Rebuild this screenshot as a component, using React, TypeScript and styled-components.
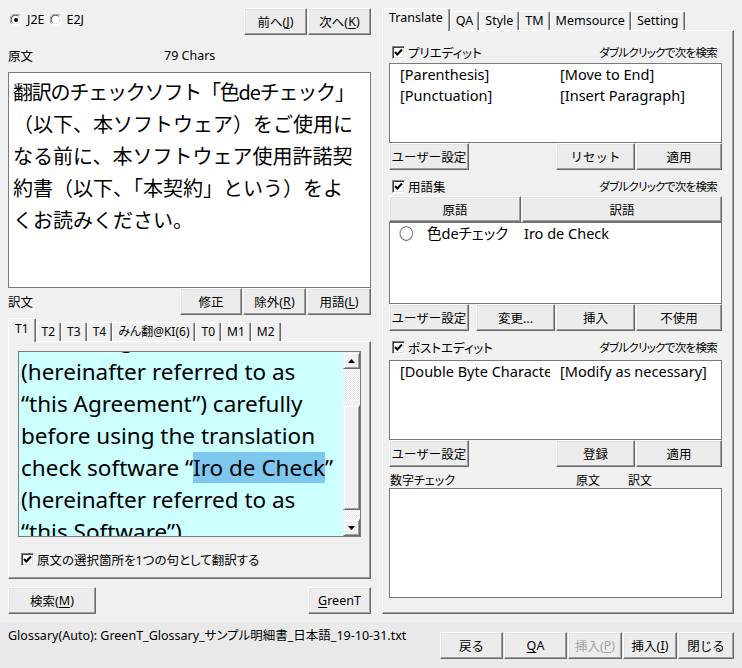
import React from "react";
import styled, { createGlobalStyle } from "styled-components";

const GlobalStyle = createGlobalStyle`
  html, body { margin: 0; padding: 0; background: #f0f0f0; }
  body {
    font-family: "Noto Sans", "Noto Sans CJK JP", sans-serif;
    font-size: 12px;
    color: #000;
  }
  * { box-sizing: border-box; }
`;

const Window = styled.div`
  width: 742px;
  height: 668px;
  display: flex;
  flex-direction: column;
  overflow: hidden;
  font-feature-settings: "palt";
`;

const Main = styled.div`
  display: flex;
  height: 622px;
`;

const LeftPane = styled.div`
  width: 363px;
  margin-left: 8px;
  padding-top: 8px;
  display: flex;
  flex-direction: column;
`;

const RightPane = styled.div`
  width: 352px;
  margin-left: 11px;
  padding-top: 8px;
  display: flex;
  flex-direction: column;
`;

const Btn = styled.button<{ $w?: number; $h?: number }>`
  width: ${(p) => (p.$w ? `${p.$w}px` : "auto")};
  height: ${(p) => p.$h ?? 27}px;
  flex-shrink: 0;
  margin: 0;
  padding: 0;
  font-family: inherit;
  font-size: 12.5px;
  color: #000;
  background: #ececec;
  border: 1px solid;
  border-color: #fff #696969 #696969 #fff;
  box-shadow: inset -1px -1px #a0a0a0, inset 1px 1px #e3e3e3;
  display: inline-flex;
  align-items: center;
  justify-content: center;
  &:disabled { color: #a3a3a3; }
  u { text-decoration-thickness: 1px; text-underline-offset: 2px; }
`;

const BtnGroup = styled.div`
  display: flex;
  gap: 1px;
`;

const TopRow = styled.div`
  height: 27px;
  display: flex;
  align-items: center;
  justify-content: space-between;
`;

const RadioGroup = styled.div`
  display: flex;
  align-items: center;
  gap: 5px;
  padding-left: 2px;
  margin-top: -4px;
`;

const RadioLabel = styled.label`
  display: flex;
  align-items: center;
  gap: 5px;
  font-size: 12.5px;
`;

const LabelRow = styled.div`
  height: 37px;
  padding-top: 4px;
  display: grid;
  grid-template-columns: 156px 1fr;
  align-items: center;
  font-size: 12.5px;
`;

const SourceBox = styled.div`
  height: 216px;
  background: #fff;
  border: 1px solid #7a7a7a;
  padding: 3px 4px;
  font-family: "Noto Sans CJK JP", sans-serif;
  font-feature-settings: normal;
  font-size: 20px;
  line-height: 32px;
  overflow: hidden;
`;

const TextLine = styled.div<{ $tight?: boolean }>`
  white-space: nowrap;
  letter-spacing: ${(p) => (p.$tight ? "-1.2px" : "0")};
`;

const TransRow = styled.div`
  height: 27px;
  display: flex;
  align-items: center;
  justify-content: space-between;
  font-size: 12.5px;
`;

const TabStrip = styled.div<{ $h: number }>`
  height: ${(p) => p.$h}px;
  display: flex;
  align-items: flex-end;
`;

const Tab = styled.div<{ $active?: boolean; $big?: boolean }>`
  position: relative;
  z-index: ${(p) => (p.$active ? 1 : 0)};
  height: ${(p) => (p.$active ? (p.$big ? 23 : 24) : 19)}px;
  margin-bottom: ${(p) => (p.$active ? -1 : 0)}px;
  padding: 0 ${(p) => (p.$active ? 6 : 5)}px ${(p) => (p.$active ? 3 : 0)}px;
  font-size: ${(p) => (p.$big ? 12.5 : 12)}px;
  line-height: 1;
  background: #f0f0f0;
  border: 1px solid;
  border-bottom: none;
  border-color: #fff #696969 transparent #fff;
  box-shadow: inset -1px 0 #a0a0a0;
  border-radius: 2px 2px 0 0;
  display: flex;
  align-items: center;
  white-space: nowrap;
`;

const TabPanel = styled.div<{ $h: number; $pad: string }>`
  height: ${(p) => p.$h}px;
  padding: ${(p) => p.$pad};
  border: 1px solid;
  border-color: #fff #696969 #696969 #fff;
  box-shadow: inset -1px -1px #a0a0a0;
  display: flex;
  flex-direction: column;
`;

const TransBox = styled.div`
  width: 343px;
  height: 186px;
  flex-shrink: 0;
  background: #ccffff;
  border: 1px solid #7a7a7a;
  display: flex;
  overflow: hidden;
`;

const TransText = styled.div`
  flex: 1;
  overflow: hidden;
  padding-left: 2px;
  font-family: "Noto Sans", sans-serif;
  font-size: 22.5px;
  line-height: 32px;
`;

const Scrolled = styled.div`
  margin-top: -28px;
`;

const Hilite = styled.span`
  display: inline-block;
  background: #7ec8ef;
  line-height: 31px;
`;

const ScrollBar = styled.div`
  width: 17px;
  flex-shrink: 0;
  display: flex;
  flex-direction: column;
`;

const ScrollPiece = styled.div<{ $h: number }>`
  height: ${(p) => p.$h}px;
  flex-shrink: 0;
  background: #f0f0f0;
  border: 1px solid;
  border-color: #f0f0f0 #696969 #696969 #f0f0f0;
  box-shadow: inset 1px 1px #fff, inset -1px -1px #a0a0a0;
  display: flex;
  align-items: center;
  justify-content: center;
`;

const Track = styled.div<{ $h: number }>`
  height: ${(p) => p.$h}px;
  flex-shrink: 0;
  background: repeating-conic-gradient(#fff 0 25%, #e4e4e4 0 50%) 0 0 / 2px 2px;
`;

const CheckRow = styled.label<{ $mt?: number; $ml?: number }>`
  display: flex;
  align-items: center;
  gap: 3px;
  margin-top: ${(p) => p.$mt ?? 0}px;
  margin-left: ${(p) => p.$ml ?? 0}px;
  font-size: 12.5px;
  white-space: nowrap;
`;

const BoxMark = styled.span`
  width: 13px;
  height: 13px;
  flex-shrink: 0;
  background: #fff;
  border: 1px solid;
  border-color: #808080 #fff #fff #808080;
  box-shadow: inset 1px 1px #404040, inset -1px -1px #dfdfdf;
  display: flex;
  align-items: center;
  justify-content: center;
`;

const SpreadRow = styled.div<{ $mt?: number }>`
  display: flex;
  justify-content: space-between;
  align-items: center;
  margin-top: ${(p) => p.$mt ?? 0}px;
`;

const StatusBar = styled.div`
  height: 46px;
  background: #e9e9e9;
  display: flex;
  justify-content: space-between;
  align-items: flex-start;
  padding: 0 8px;
`;

const StatusText = styled.div`
  margin-top: 6px;
  font-size: 12.5px;
  line-height: 16px;
  white-space: nowrap;
`;

const StatusBtns = styled(BtnGroup)`
  margin-top: 10px;
`;

const SectionHead = styled.div<{ $mt: number }>`
  height: 20px;
  flex-shrink: 0;
  margin-top: ${(p) => p.$mt}px;
  display: flex;
  align-items: center;
  justify-content: space-between;
  padding: 0 5px 0 3px;
`;

const Hint = styled.span`
  font-size: 11.5px;
  letter-spacing: -0.7px;
`;

const ListBox = styled.div<{ $h: number; $mt?: number }>`
  height: ${(p) => p.$h}px;
  flex-shrink: 0;
  margin-top: ${(p) => p.$mt ?? 0}px;
  background: #fff;
  border: 1px solid #7a7a7a;
  overflow: hidden;
`;

const ListRow = styled.div`
  height: 21px;
  line-height: 21px;
  padding-left: 10px;
  display: grid;
  grid-template-columns: 150px 1fr;
  column-gap: 10px;
  font-size: 14.5px;
  white-space: nowrap;
  span { overflow: hidden; }
`;

const GlossRow = styled.div`
  height: 21px;
  line-height: 21px;
  padding-left: 9px;
  display: flex;
  font-size: 14.5px;
  white-space: nowrap;
`;

const GlossCell = styled.span<{ $w: number }>`
  width: ${(p) => p.$w}px;
  flex-shrink: 0;
`;

const PanelBtnRow = styled.div`
  display: flex;
  gap: 1px;
  flex-shrink: 0;
`;

const Spacer = styled.div`
  flex: 1;
`;

const NumHead = styled.div`
  height: 17px;
  margin-top: 4px;
  flex-shrink: 0;
  display: grid;
  grid-template-columns: 186px 52px auto;
  align-items: center;
  padding-left: 1px;
  font-size: 12px;
`;

const RadioIcon = ({ checked }: { checked?: boolean }) => (
  <svg width="12" height="12" viewBox="0 0 12 12">
    <circle cx="6" cy="6" r="5.5" fill="#fff" />
    <path d="M1.6 9.9 A5.5 5.5 0 0 1 9.9 1.6" fill="none" stroke="#808080" />
    <path d="M9.9 1.6 A5.5 5.5 0 0 1 1.6 9.9" fill="none" stroke="#fff" />
    <path d="M2.5 8.8 A4.3 4.3 0 0 1 8.8 2.5" fill="none" stroke="#404040" />
    <path d="M8.8 2.5 A4.3 4.3 0 0 1 2.5 8.8" fill="none" stroke="#dcdcdc" />
    {checked && <circle cx="6" cy="6" r="2" fill="#000" />}
  </svg>
);

const Check = () => (
  <BoxMark>
    <svg width="9" height="9" viewBox="0 0 9 9">
      <polyline points="1,4 3.3,6.5 8,1.5" fill="none" stroke="#000" strokeWidth="2" />
    </svg>
  </BoxMark>
);

const Arrow = ({ down }: { down?: boolean }) => (
  <svg width="7" height="4" viewBox="0 0 7 4">
    <polygon points={down ? "0,0 7,0 3.5,4" : "0,4 7,4 3.5,0"} fill="#000" />
  </svg>
);

const leftTabs = ["T1", "T2", "T3", "T4", "みん翻@KI(6)", "T0", "M1", "M2"];
const rightTabs = ["Translate", "QA", "Style", "TM", "Memsource", "Setting"];
const hint = "ダブルクリックで次を検索";

export default function App() {
  return (
    <>
      <GlobalStyle />
      <Window>
        <Main>
          <LeftPane>
            <TopRow>
              <RadioGroup>
                <RadioLabel>
                  <RadioIcon checked />
                  J2E
                </RadioLabel>
                <RadioLabel>
                  <RadioIcon />
                  E2J
                </RadioLabel>
              </RadioGroup>
              <BtnGroup>
                <Btn $w={63}>
                  前へ(<u>J</u>)
                </Btn>
                <Btn $w={63}>
                  次へ(<u>K</u>)
                </Btn>
              </BtnGroup>
            </TopRow>

            <LabelRow>
              <span>原文</span>
              <span>79 Chars</span>
            </LabelRow>

            <SourceBox>
              <TextLine $tight>翻訳のチェックソフト「色deチェック」</TextLine>
              <TextLine>（以下、本ソフトウェア）をご使用に</TextLine>
              <TextLine>なる前に、本ソフトウェア使用許諾契</TextLine>
              <TextLine>約書（以下、「本契約」という）をよ</TextLine>
              <TextLine>くお読みください。</TextLine>
            </SourceBox>

            <TransRow>
              <span>訳文</span>
              <BtnGroup>
                <Btn $w={62}>修正</Btn>
                <Btn $w={63}>
                  除外(<u>R</u>)
                </Btn>
                <Btn $w={64}>
                  用語(<u>L</u>)
                </Btn>
              </BtnGroup>
            </TransRow>

            <TabStrip $h={26}>
              {leftTabs.map((t, i) => (
                <Tab key={t} $active={i === 0}>
                  {t}
                </Tab>
              ))}
            </TabStrip>
            <TabPanel $h={238} $pad="9px 8px 0 9px">
              <TransBox>
                <TransText>
                  <Scrolled>
                    <TextLine>License Agreement</TextLine>
                    <TextLine>(hereinafter referred to as</TextLine>
                    <TextLine>“this Agreement”) carefully</TextLine>
                    <TextLine>before using the translation</TextLine>
                    <TextLine>
                      check software “<Hilite>Iro de Check</Hilite>”
                    </TextLine>
                    <TextLine>(hereinafter referred to as</TextLine>
                    <TextLine>“this Software”).</TextLine>
                  </Scrolled>
                </TransText>
                <ScrollBar>
                  <ScrollPiece $h={17}>
                    <Arrow />
                  </ScrollPiece>
                  <Track $h={36} />
                  <ScrollPiece $h={105} />
                  <Track $h={9} />
                  <ScrollPiece $h={17}>
                    <Arrow down />
                  </ScrollPiece>
                </ScrollBar>
              </TransBox>
              <CheckRow $mt={13} $ml={3}>
                <Check />
                原文の選択箇所を1つの句として翻訳する
              </CheckRow>
            </TabPanel>

            <SpreadRow $mt={8}>
              <Btn $w={88}>
                検索(<u>M</u>)
              </Btn>
              <Btn $w={63}>
                <u>G</u>reenT
              </Btn>
            </SpreadRow>
          </LeftPane>

          <RightPane>
            <TabStrip $h={22}>
              {rightTabs.map((t, i) => (
                <Tab key={t} $active={i === 0} $big>
                  {t}
                </Tab>
              ))}
            </TabStrip>
            <TabPanel $h={584} $pad="11px 11px 0 6px">
              <SectionHead $mt={0}>
                <CheckRow>
                  <Check />
                  プリエディット
                </CheckRow>
                <Hint>{hint}</Hint>
              </SectionHead>
              <ListBox $h={80} $mt={1}>
                <ListRow>
                  <span>[Parenthesis]</span>
                  <span>[Move to End]</span>
                </ListRow>
                <ListRow>
                  <span>[Punctuation]</span>
                  <span>[Insert Paragraph]</span>
                </ListRow>
              </ListBox>
              <PanelBtnRow>
                <Btn $w={80}>ユーザー設定</Btn>
                <Spacer />
                <Btn $w={79}>リセット</Btn>
                <Btn $w={86}>適用</Btn>
              </PanelBtnRow>

              <SectionHead $mt={6}>
                <CheckRow>
                  <Check />
                  用語集
                </CheckRow>
                <Hint>{hint}</Hint>
              </SectionHead>
              <PanelBtnRow>
                <Btn $w={132} $h={26}>
                  原語
                </Btn>
                <Btn $w={200} $h={26}>
                  訳語
                </Btn>
              </PanelBtnRow>
              <ListBox $h={82}>
                <GlossRow>
                  <GlossCell $w={28}>○</GlossCell>
                  <GlossCell $w={97}>色deチェック</GlossCell>
                  <GlossCell $w={120}>Iro de Check</GlossCell>
                </GlossRow>
              </ListBox>
              <PanelBtnRow>
                <Btn $w={80}>ユーザー設定</Btn>
                <Spacer />
                <Btn $w={79}>変更...</Btn>
                <Btn $w={79}>挿入</Btn>
                <Btn $w={86}>不使用</Btn>
              </PanelBtnRow>

              <SectionHead $mt={6}>
                <CheckRow>
                  <Check />
                  ポストエディット
                </CheckRow>
                <Hint>{hint}</Hint>
              </SectionHead>
              <ListBox $h={80} $mt={3}>
                <ListRow>
                  <span>[Double Byte Characters]</span>
                  <span>[Modify as necessary]</span>
                </ListRow>
              </ListBox>
              <PanelBtnRow>
                <Btn $w={80}>ユーザー設定</Btn>
                <Spacer />
                <Btn $w={79}>登録</Btn>
                <Btn $w={86}>適用</Btn>
              </PanelBtnRow>

              <NumHead>
                <span>数字チェック</span>
                <span>原文</span>
                <span>訳文</span>
              </NumHead>
              <ListBox $h={110} />
            </TabPanel>
          </RightPane>
        </Main>

        <StatusBar>
          <StatusText>Glossary(Auto): GreenT_Glossary_サンプル明細書_日本語_19-10-31.txt</StatusText>
          <StatusBtns>
            <Btn $w={63}>戻る</Btn>
            <Btn $w={63}>
              <u>Q</u>A
            </Btn>
            <Btn $w={54} disabled>
              挿入(<u>P</u>)
            </Btn>
            <Btn $w={54}>
              挿入(<u>I</u>)
            </Btn>
            <Btn $w={56}>閉じる</Btn>
          </StatusBtns>
        </StatusBar>
      </Window>
    </>
  );
}
